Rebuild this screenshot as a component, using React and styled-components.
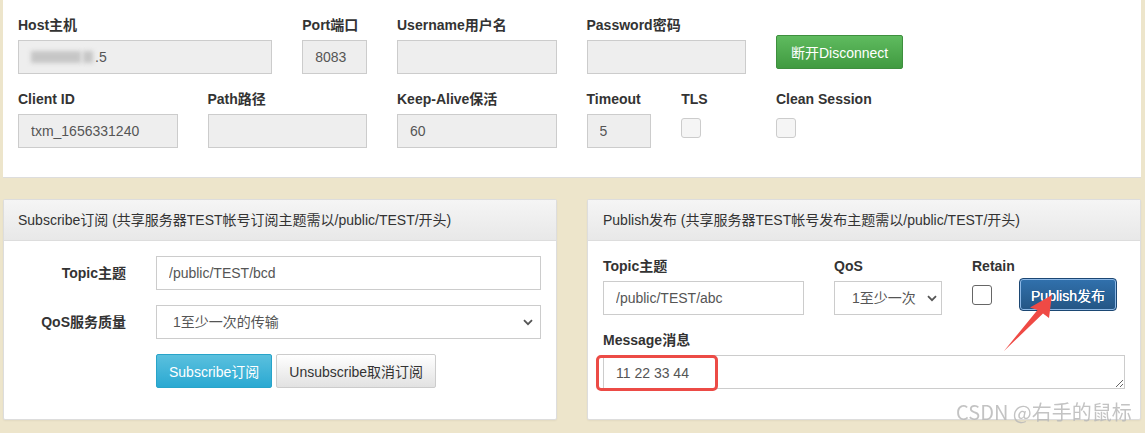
import React from "react";
import styled, { createGlobalStyle, css } from "styled-components";

const GlobalStyle = createGlobalStyle`
  html, body { margin: 0; padding: 0; background: #ede5cb; }
  body {
    font-family: "Liberation Sans", Arial, "Noto Sans CJK SC", sans-serif;
    font-size: 14px;
    color: #333;
  }
  * { box-sizing: border-box; }
`;

const Page = styled.div`
  position: relative;
  width: 1145px;
  height: 433px;
  overflow: hidden;
  padding: 0 4px 0 3px;
  background: #ede5cb;
`;

const TopPanel = styled.div`
  background: #fff;
  padding: 15px 16px 14px 15px;
  border-bottom: 1px solid #ddd;
  display: grid;
  grid-template-columns: repeat(12, 1fr);
  column-gap: 30px;
`;

const Field = styled.div`
  grid-column: ${(p) => (p.start ? `${p.start} / span ${p.span}` : `span ${p.span}`)};
  margin-bottom: 15px;
  display: flex;
  flex-direction: column;
  align-items: flex-start;
`;

const Label = styled.label`
  display: block;
  font-weight: bold;
  line-height: 20px;
  margin-bottom: 5px;
  color: #333;
  white-space: nowrap;
`;

const inputBase = css`
  display: block;
  width: 100%;
  height: 34px;
  padding: 0 12px;
  font: inherit;
  font-size: 14px;
  color: #555;
  border: 1px solid #ccc;
  border-radius: 0;
  outline: none;
`;

const Input = styled.input`
  ${inputBase};
  background: ${(p) => (p.readOnly ? "#eee" : "#fff")};
`;

const FakeInput = styled.div`
  ${inputBase};
  background: #eee;
  display: flex;
  align-items: center;
`;

const Blur = styled.span`
  display: inline-block;
  width: ${(p) => p.w}px;
  height: 12px;
  margin-right: 2px;
  background: #c6c6c6;
  filter: blur(2px);
`;

const Check = styled.input.attrs({ type: "checkbox" })`
  appearance: none;
  -webkit-appearance: none;
  margin: ${(p) => (p.inline ? "0" : "4px 0 0")};
  width: 20px;
  height: 20px;
  border-radius: 3px;
  border: 1px solid ${(p) => (p.dark ? "#666" : "#ccc")};
  background: ${(p) => (p.dark ? "#fff" : "#f5f5f5")};
`;

const Button = styled.button`
  height: 34px;
  padding: 0 12px;
  font: inherit;
  font-size: 14px;
  border: 1px solid;
  border-radius: 2px;
  cursor: pointer;
  white-space: nowrap;
  ${(p) =>
    p.variant === "success" &&
    css`
      color: #fff;
      background: linear-gradient(#5fbb5f, #409a40);
      border-color: #3e8f3e;
      padding: 0 14px;
    `}
  ${(p) =>
    p.variant === "info" &&
    css`
      color: #fff;
      background: linear-gradient(#5ac0de, #2aa9d2);
      border-color: #28a4c9;
    `}
  ${(p) =>
    p.variant === "default" &&
    css`
      color: #333;
      background: linear-gradient(#fff, #e2e2e2);
      border-color: #ccc;
    `}
  ${(p) =>
    p.variant === "primary" &&
    css`
      color: #fff;
      height: 33px;
      width: 98px;
      padding: 0;
      border-color: #1c4773;
      border-radius: 4px;
      background: linear-gradient(#3171ad, #245584);
      box-shadow: inset 0 0 0 1px #8db8e6;
      text-shadow: 0 0 0.6px #fff;
    `}
`;

const DisconnectButton = styled(Button)`
  margin-top: 20px;
`;

const Columns = styled.div`
  display: grid;
  grid-template-columns: 1fr 1fr;
  column-gap: 30px;
  margin-top: 21px;
`;

const Panel = styled.div`
  background: #fff;
  border: 1px solid #ddd;
  border-radius: 2px;
  box-shadow: 0 1px 2px rgba(0, 0, 0, 0.05);
`;

const PanelHeading = styled.div`
  padding: 10px 15px 10px ${(p) => p.pl || 15}px;
  line-height: 20px;
  color: #333;
  border-bottom: 1px solid #ddd;
  background: linear-gradient(#f5f5f5, #e8e8e8);
  white-space: nowrap;
`;

const PanelBody = styled.div`
  padding: 15px 15px ${(p) => p.pb || 15}px;
`;

const HForm = styled.div`
  display: grid;
  grid-template-columns: 107px 1fr;
  column-gap: 30px;
  row-gap: 15px;
`;

const HLabel = styled.label`
  text-align: right;
  font-weight: bold;
  line-height: 34px;
  white-space: nowrap;
`;

const ButtonRow = styled.div`
  grid-column: 2;
  display: flex;
  gap: 4px;
`;

const SelectWrap = styled.div`
  position: relative;
  width: 100%;
`;

const Select = styled.select`
  ${inputBase};
  appearance: none;
  -webkit-appearance: none;
  background: #fff;
  padding-left: ${(p) => p.pl || 16}px;
`;

const Chevron = styled.svg`
  position: absolute;
  right: ${(p) => p.r || 7}px;
  top: 50%;
  margin-top: -3px;
  pointer-events: none;
`;

const PubGrid = styled.div`
  display: grid;
  grid-template-columns: 201px 108px 1fr;
  column-gap: 30px;
`;

const PubField = styled.div`
  grid-column: ${(p) => (p.full ? "1 / -1" : "auto")};
  margin-bottom: 15px;
`;

const RetainRow = styled.div`
  display: flex;
  align-items: center;
  gap: 27px;
  margin-top: -3px;
`;

const TextArea = styled.textarea`
  ${inputBase};
  background: #fff;
  padding: 7px 12px;
  line-height: 20px;
  resize: vertical;
`;

const RedBox = styled.div`
  position: absolute;
  left: 596px;
  top: 355px;
  width: 122px;
  height: 36px;
  border: 3px solid #ec4b46;
  border-radius: 5px;
  pointer-events: none;
`;

const ArrowSvg = styled.svg`
  position: absolute;
  left: 0;
  top: 0;
  pointer-events: none;
`;

const Watermark = styled.div`
  position: absolute;
  left: 956px;
  top: 398px;
  font-family: "Noto Sans CJK SC", "Liberation Sans", sans-serif;
  font-size: 20px;
  line-height: 28px;
  color: rgba(185, 185, 185, 0.85);
  white-space: nowrap;
  pointer-events: none;
`;

function ChevronIcon({ r }) {
  return (
    <Chevron r={r} width="10" height="7" viewBox="0 0 10 7">
      <path d="M1 1.2 L5 5.2 L9 1.2" fill="none" stroke="#555" strokeWidth="1.8" />
    </Chevron>
  );
}

export default function App() {
  return (
    <>
      <GlobalStyle />
      <Page>
        <TopPanel>
          <Field span={3}>
            <Label>Host主机</Label>
            <FakeInput>
              <Blur w={50} />
              <Blur w={10} />
              <span>.5</span>
            </FakeInput>
          </Field>
          <Field span={1}>
            <Label>Port端口</Label>
            <Input readOnly value="8083" />
          </Field>
          <Field span={2}>
            <Label>Username用户名</Label>
            <Input readOnly value="" />
          </Field>
          <Field span={2}>
            <Label>Password密码</Label>
            <Input readOnly type="password" value="" />
          </Field>
          <Field span={2}>
            <DisconnectButton variant="success">断开Disconnect</DisconnectButton>
          </Field>

          <Field start={1} span={2}>
            <Label>Client ID</Label>
            <Input readOnly value="txm_1656331240" />
          </Field>
          <Field span={2}>
            <Label>Path路径</Label>
            <Input readOnly value="" />
          </Field>
          <Field span={2}>
            <Label>Keep-Alive保活</Label>
            <Input readOnly value="60" />
          </Field>
          <Field span={1}>
            <Label>Timeout</Label>
            <Input readOnly value="5" />
          </Field>
          <Field span={1}>
            <Label>TLS</Label>
            <Check readOnly />
          </Field>
          <Field span={2}>
            <Label>Clean Session</Label>
            <Check readOnly />
          </Field>
        </TopPanel>

        <Columns>
          <Panel>
            <PanelHeading pl={14}>
              Subscribe订阅 (共享服务器TEST帐号订阅主题需以/public/TEST/开头)
            </PanelHeading>
            <PanelBody pb={30}>
              <HForm>
                <HLabel>Topic主题</HLabel>
                <Input defaultValue="/public/TEST/bcd" />
                <HLabel>QoS服务质量</HLabel>
                <SelectWrap>
                  <Select defaultValue="1">
                    <option value="0">0最多一次的传输</option>
                    <option value="1">1至少一次的传输</option>
                    <option value="2">2只有一次的传输</option>
                  </Select>
                  <ChevronIcon r={8} />
                </SelectWrap>
                <ButtonRow>
                  <Button variant="info">Subscribe订阅</Button>
                  <Button variant="default">Unsubscribe取消订阅</Button>
                </ButtonRow>
              </HForm>
            </PanelBody>
          </Panel>

          <Panel>
            <PanelHeading>
              Publish发布 (共享服务器TEST帐号发布主题需以/public/TEST/开头)
            </PanelHeading>
            <PanelBody>
              <PubGrid>
                <PubField>
                  <Label>Topic主题</Label>
                  <Input defaultValue="/public/TEST/abc" />
                </PubField>
                <PubField>
                  <Label>QoS</Label>
                  <SelectWrap>
                    <Select defaultValue="1" pl={17}>
                      <option value="0">0最多一次</option>
                      <option value="1">1至少一次</option>
                      <option value="2">2只有一次</option>
                    </Select>
                    <ChevronIcon r={5} />
                  </SelectWrap>
                </PubField>
                <PubField>
                  <Label>Retain</Label>
                  <RetainRow>
                    <Check dark inline readOnly />
                    <Button variant="primary">Publish发布</Button>
                  </RetainRow>
                </PubField>
                <PubField full>
                  <Label>Message消息</Label>
                  <TextArea rows={1} defaultValue="11 22 33 44" />
                </PubField>
              </PubGrid>
            </PanelBody>
          </Panel>
        </Columns>

        <RedBox />
        <ArrowSvg width="1145" height="433" viewBox="0 0 1145 433">
          <polygon
            points="1004,351 1037.5,310 1030,307.5 1052,295 1049,318 1043,313.5"
            fill="#ef4a45"
          />
        </ArrowSvg>
        <Watermark>CSDN @右手的鼠标</Watermark>
      </Page>
    </>
  );
}
